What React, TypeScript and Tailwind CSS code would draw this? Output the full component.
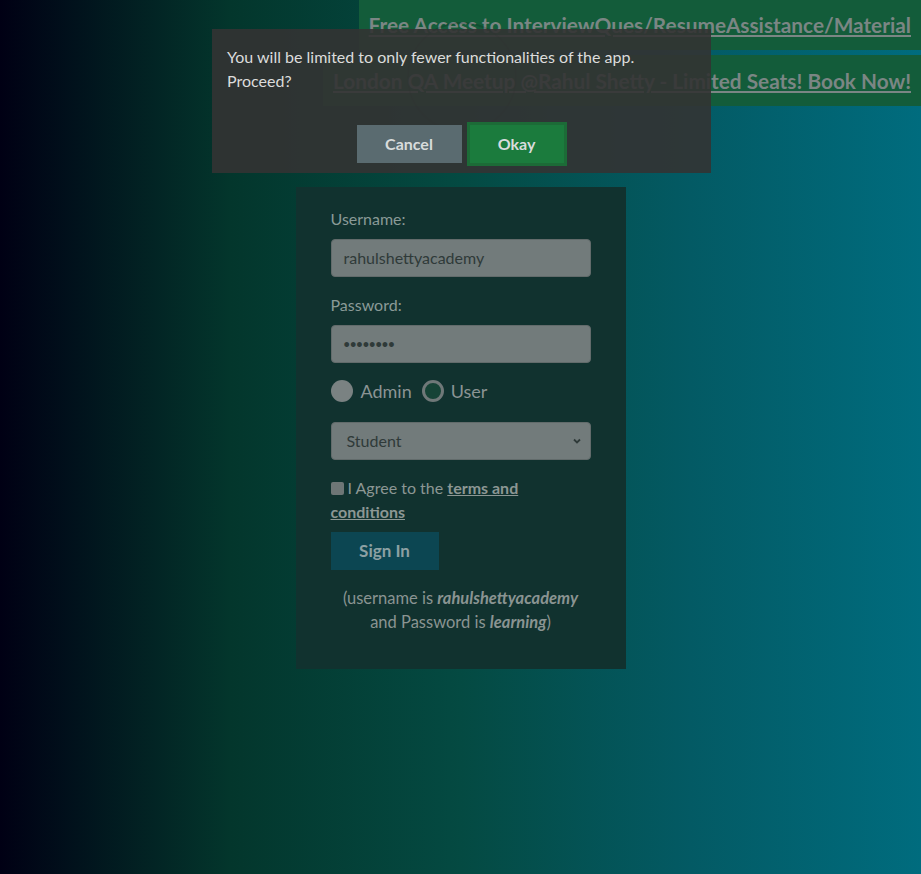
import React from "react";

export default function App() {
  return (
    <div className="relative min-h-screen w-full overflow-hidden bg-[linear-gradient(to_right,#000014_0%,#03362c_25%,#044a42_50%,#035a64_75%,#006c7e_100%)] font-['Lato',sans-serif]">
      {/* top banners */}
      <div className="flex flex-col items-end gap-[5px]">
        <a className="block bg-[#135c3a] px-[10px] h-[50px] leading-[50px] text-[20.8px] font-bold text-[#7b8684] underline underline-offset-2">
          Free Access to InterviewQues/ResumeAssistance/Material
        </a>
        <a className="block bg-[#135c3a] px-[10px] h-[51px] leading-[51px] text-[20.8px] font-bold text-[#7b8684] underline underline-offset-2">
          London QA Meetup @Rahul Shetty - Limited Seats! Book Now!
        </a>
      </div>

      {/* login card */}
      <div className="mx-auto mt-[81px] w-[330px] h-[482px] bg-[#11322f] px-[35px] pt-[21px]">
        <label className="block text-[16px] leading-[22px] text-[#8a9a97]">Username:</label>
        <div className="mt-[9px] h-[38px] rounded-[4px] border border-[#626b6b] bg-[#727b7b] pl-[12px] text-[16px] leading-[36px] text-[#2f3a39]">
          rahulshettyacademy
        </div>
        <label className="mt-[17px] block text-[16px] leading-[22px] text-[#8a9a97]">Password:</label>
        <div className="mt-[9px] h-[38px] rounded-[4px] border border-[#626b6b] bg-[#727b7b] pl-[12px] text-[11px] font-bold leading-[36px] text-[#2f3a39]">
          ••••••••
        </div>
        <div className="mt-[16px] flex items-center h-[24px] text-[18px] text-[#8b9494]">
          <span className="h-[22px] w-[22px] rounded-full bg-[#7a8282]" />
          <span className="ml-[8px]">Admin</span>
          <span className="ml-[10px] h-[22px] w-[22px] rounded-full border-[3px] border-[#6f7878] bg-[#164336]" />
          <span className="ml-[7px]">User</span>
        </div>
        <div className="mt-[19px] flex h-[38px] items-center justify-between rounded-[4px] border border-[#626b6b] bg-[#727b7b] pl-[15px] pr-[8px] text-[16px] text-[#2f3a39]">
          <span>Student</span>
          <svg width="10" height="10" viewBox="0 0 10 10" fill="none">
            <path d="M2 3.5 L5 6.5 L8 3.5" stroke="#2f3a39" strokeWidth="1.8" />
          </svg>
        </div>
        <div className="mt-[16px] text-[16px] leading-[24px] text-[#8c9794]">
          <div className="flex items-center">
            <span className="mr-[4px] h-[13px] w-[13px] rounded-[2px] bg-[#6e7676]" />
            <span>I Agree to the&nbsp;</span>
            <a className="font-bold underline">terms and</a>
          </div>
          <a className="block font-bold underline">conditions</a>
        </div>
        <button className="mt-[8px] h-[38px] w-[108px] bg-[#0c4652] text-[17px] font-bold text-[#8ca0a3]">
          Sign In
        </button>
        <p className="mt-[16px] text-center text-[16.5px] leading-[24px] text-[#8a9492]">
          (username is <b><i>rahulshettyacademy</i></b>
          <br />
          and Password is <b><i>learning</i></b>)
        </p>
      </div>

      {/* faint spinner */}
      <div className="absolute left-[407px] top-[22px] h-[110px] w-[110px] rounded-full border-2 border-black/15" />

      {/* alert dialog */}
      <div className="absolute left-[212px] top-[29px] h-[144px] w-[499px] bg-[#333]/90 px-[15px] pt-[16px]">
        <p className="text-[16px] leading-[24px] text-[#dcdcdc]">
          You will be limited to only fewer functionalities of the app.
          <br />
          Proceed?
        </p>
        <div className="mt-[29px] flex items-center justify-center gap-[5px]">
          <button className="h-[38px] w-[105px] bg-[#5a6b70] text-[16px] font-bold text-[#d8dcdc]">
            Cancel
          </button>
          <button className="h-[44px] w-[100px] border-[3px] border-[#1c6b37] bg-[#1b7b3d] text-[16px] font-bold text-[#d8dcdc]">
            Okay
          </button>
        </div>
      </div>
    </div>
  );
}
